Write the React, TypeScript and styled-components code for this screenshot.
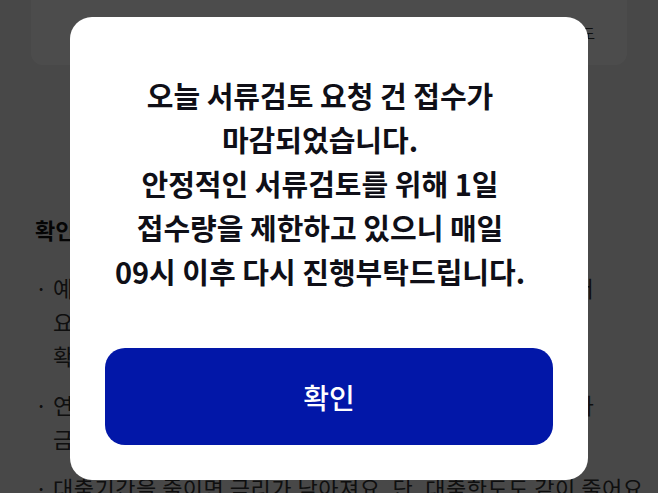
import React from "react";
import styled, { createGlobalStyle } from "styled-components";

const GlobalStyle = createGlobalStyle`
  html, body {
    margin: 0;
    height: 100%;
    overflow: hidden;
    background: #f0f0f0;
    font-family: "Noto Sans CJK KR", "Noto Sans", sans-serif;
  }
  * { box-sizing: border-box; }
`;

const Page = styled.div`
  height: 100vh;
  background: #f0f0f0;
  overflow: hidden;
`;

const NoticeBox = styled.div`
  margin: 0 31px;
  height: 65px;
  padding: 22px 32px 0;
  background: #ffffff;
  border-radius: 0 0 12px 12px;
  font-size: 15px;
  color: #333;
  text-align: right;
  white-space: nowrap;
  overflow: hidden;
`;

const Section = styled.section`
  padding: 0 35px;
  margin-top: 149px;
`;

const Heading = styled.h3`
  margin: 0 0 26px;
  font-size: 22px;
  font-weight: 700;
  color: #111;
  line-height: 30px;
`;

const List = styled.ul`
  margin: 0;
  padding: 0;
  list-style: none;
`;

const Item = styled.li`
  position: relative;
  padding-left: 18px;
  margin-bottom: 15px;
  font-size: 22px;
  letter-spacing: 0.5px;
  line-height: 34px;
  color: #333;
  white-space: nowrap;

  &::before {
    content: "·";
    position: absolute;
    left: 0;
    top: 0;
    color: #333;
  }
`;

const Overlay = styled.div`
  position: fixed;
  inset: 0;
  background: rgba(0, 0, 0, 0.7);
  display: flex;
  align-items: center;
  justify-content: center;
`;

const Dialog = styled.div`
  width: 518px;
  height: 463px;
  margin-top: 4px;
  padding: 56px 35px 35px;
  background: #ffffff;
  border-radius: 22px;
  display: flex;
  flex-direction: column;
`;

const Message = styled.p`
  margin: 0;
  padding-right: 18px;
  font-size: 29px;
  font-weight: 700;
  line-height: 44px;
  text-align: center;
  color: #0f0f17;
  white-space: nowrap;
`;

const ConfirmButton = styled.button`
  margin-top: auto;
  height: 97px;
  width: 100%;
  border: none;
  border-radius: 20px;
  background: #0217a8;
  color: #ffffff;
  font-family: inherit;
  font-size: 28px;
  font-weight: 500;
  cursor: pointer;
`;

export default function App() {
  return (
    <>
      <GlobalStyle />
      <Page>
        <NoticeBox>서류를 미리 준비해 주시면 심사가 더 빨라지며 결과 안내도</NoticeBox>
        <Section>
          <Heading>확인사항</Heading>
          <List>
            <Item>
              예상 금리와 한도는 서류검토 결과에 따라 달라질 수 있어서
              <br />
              요청하신 금액과 실제 승인 금액이 다를 수 있으니 결과를
              <br />
              확인해 주세요.
            </Item>
            <Item>
              연체 이력이 있거나 소득 증빙이 어려운 경우엔 결과가 달라
              <br />
              금리와 한도가 변경될 수 있어요.
            </Item>
            <Item>대출기간을 줄이면 금리가 낮아져요. 단, 대출한도도 같이 줄어요.</Item>
          </List>
        </Section>
      </Page>
      <Overlay>
        <Dialog role="alertdialog">
          <Message>
            오늘 서류검토 요청 건 접수가
            <br />
            마감되었습니다.
            <br />
            안정적인 서류검토를 위해 1일
            <br />
            접수량을 제한하고 있으니 매일
            <br />
            09시 이후 다시 진행부탁드립니다.
          </Message>
          <ConfirmButton>확인</ConfirmButton>
        </Dialog>
      </Overlay>
    </>
  );
}
